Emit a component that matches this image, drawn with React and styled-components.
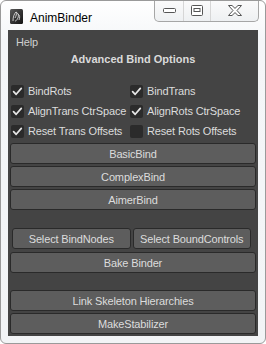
import React from "react";
import styled, { createGlobalStyle } from "styled-components";

const Global = createGlobalStyle`
  html, body { margin: 0; padding: 0; background: #ffffff; }
  #root { width: 266px; height: 344px; }
`;

const Window = styled.div`
  box-sizing: border-box;
  width: 266px;
  height: 344px;
  border: 1px solid #9a9a9a;
  border-radius: 6px;
  background: linear-gradient(#ffffff, #f4f6f8 40px, #f2f4f6);
  display: flex;
  flex-direction: column;
  font-family: "Liberation Sans", Arial, sans-serif;
  overflow: hidden;
`;

const TitleBar = styled.div`
  height: 29px;
  flex: none;
  display: flex;
  align-items: flex-start;
  padding-left: 9px;
`;

const AppIcon = styled.div`
  width: 13px;
  height: 15px;
  margin-top: 8px;
  flex: none;
`;

const Title = styled.span`
  margin-left: 7px;
  margin-top: 10px;
  font-size: 12px;
  line-height: 14px;
  color: #000;
`;

const Controls = styled.div`
  margin-left: auto;
  margin-right: 6px;
  margin-top: -1px;
  display: flex;
  height: 21px;
  border: 1px solid #a6a6a6;
  border-top: none;
  border-radius: 0 0 5px 5px;
  background: linear-gradient(#fbfbfb, #eef0f2);
  overflow: hidden;
`;

const CtrlBtn = styled.div`
  width: ${(p) => p.$w}px;
  display: flex;
  align-items: center;
  justify-content: center;
  border-left: ${(p) => (p.$first ? "none" : "1px solid #d6d6d6")};
`;

const Content = styled.div`
  flex: 1;
  margin: 0 7px 7px 7px;
  background: #444444;
  display: flex;
  flex-direction: column;
  padding: 0 2px;
  color: #dcdcdc;
  font-size: 11px;
  letter-spacing: -0.15px;
`;

const MenuBar = styled.div`
  height: 23px;
  line-height: 24px;
  padding-left: 6px;
  color: #cfcfcf;
`;

const Heading = styled.div`
  height: 13px;
  line-height: 13px;
  text-align: center;
  font-weight: bold;
  color: #dadada;
  letter-spacing: 0;
`;

const CheckGrid = styled.div`
  margin-top: 15px;
  display: grid;
  grid-template-columns: 119px 1fr;
  grid-auto-rows: 20px;
  padding-left: 1px;
`;

const CheckItem = styled.label`
  display: flex;
  align-items: center;
  gap: 4px;
  color: #dcdcdc;
  white-space: nowrap;
`;

const Box = styled.span`
  width: 13px;
  height: 13px;
  border-radius: 2px;
  background: #2b2b2b;
  display: flex;
  align-items: center;
  justify-content: center;
  flex: none;
`;

const ButtonStack = styled.div`
  display: flex;
  flex-direction: column;
  gap: ${(p) => p.$gap ?? 2}px;
  margin-top: ${(p) => p.$top}px;
`;

const Row = styled.div`
  display: flex;
  gap: 2px;
  padding: 0 5px 0 2px;
`;

const Button = styled.div`
  box-sizing: border-box;
  flex: ${(p) => (p.$grow ? "1 1 0" : "none")};
  height: 21px;
  border: 1px solid #2a2a2a;
  border-radius: 3px;
  background: #5d5d5d;
  color: #dcdcdc;
  font-size: 11px;
  display: flex;
  align-items: center;
  justify-content: center;
  white-space: nowrap;
`;

const Check = ({ on, children }) => (
  <CheckItem>
    <Box>
      {on && (
        <svg width="13" height="13" viewBox="0 0 13 13">
          <path d="M2.6 6.6 L5.2 9.3 L10.3 3.4" fill="none" stroke="#e6e6e6" strokeWidth="1.7" strokeLinecap="round" strokeLinejoin="round" />
        </svg>
      )}
    </Box>
    {children}
  </CheckItem>
);

export default function App() {
  return (
    <>
      <Global />
      <Window>
        <TitleBar>
          <AppIcon>
            <svg width="13" height="15" viewBox="0 0 13 15">
              <defs>
                <linearGradient id="ig" x1="0" y1="0" x2="1" y2="1">
                  <stop offset="0" stopColor="#5a5a5a" />
                  <stop offset="1" stopColor="#111" />
                </linearGradient>
              </defs>
              <rect x="0" y="0" width="13" height="15" rx="1.5" fill="url(#ig)" />
              <path d="M3 12 C3 8 4 5 6 3 C7 5 6 7 5 9 M6 3 C8 4 9 6 8 9 C7 11 6 12 5 12 M8 5 C10 6 10 9 9 11" fill="none" stroke="#d8d8d8" strokeWidth="0.9" />
            </svg>
          </AppIcon>
          <Title>AnimBinder</Title>
          <Controls>
            <CtrlBtn $w={28} $first>
              <svg width="13" height="5" viewBox="0 0 13 5">
                <rect x="0.5" y="0.5" width="12" height="4" rx="1" fill="#fff" stroke="#555" />
              </svg>
            </CtrlBtn>
            <CtrlBtn $w={26}>
              <svg width="12" height="11" viewBox="0 0 12 11">
                <rect x="0.5" y="0.5" width="11" height="10" rx="1" fill="#fff" stroke="#555" />
                <rect x="3" y="3.5" width="6" height="3" fill="none" stroke="#555" />
              </svg>
            </CtrlBtn>
            <CtrlBtn $w={47}>
              <svg width="14" height="11" viewBox="0 0 14 11">
                <path d="M0.5 0.5 H4 L7 3.4 L10 0.5 H13.5 L9 5.5 L13.5 10.5 H10 L7 7.6 L4 10.5 H0.5 L5 5.5 Z" fill="#fff" stroke="#555" strokeLinejoin="round" />
              </svg>
            </CtrlBtn>
          </Controls>
        </TitleBar>
        <Content>
          <MenuBar>Help</MenuBar>
          <Heading>Advanced Bind Options</Heading>
          <CheckGrid>
            <Check on>BindRots</Check>
            <Check on>BindTrans</Check>
            <Check on>AlignTrans CtrSpace</Check>
            <Check on>AlignRots CtrSpace</Check>
            <Check on>Reset Trans Offsets</Check>
            <Check>Reset Rots Offsets</Check>
          </CheckGrid>
          <ButtonStack $top={2}>
            <Button>BasicBind</Button>
            <Button>ComplexBind</Button>
            <Button>AimerBind</Button>
          </ButtonStack>
          <ButtonStack $top={18} $gap={3}>
            <Row>
              <Button $grow>Select BindNodes</Button>
              <Button $grow>Select BoundControls</Button>
            </Row>
            <Button>Bake Binder</Button>
          </ButtonStack>
          <ButtonStack $top={17}>
            <Button>Link Skeleton Hierarchies</Button>
            <Button>MakeStabilizer</Button>
          </ButtonStack>
        </Content>
      </Window>
    </>
  );
}
